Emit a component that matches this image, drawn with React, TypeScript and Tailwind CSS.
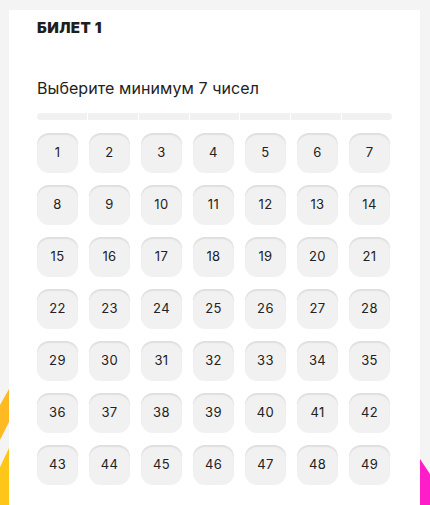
const numbers = Array.from({ length: 49 }, (_, i) => i + 1)

export default function App() {
  return (
    <div className="flex h-[505px] w-[430px] overflow-hidden bg-[#f4f4f4] font-['Inter',sans-serif] text-[#1e1e1e]">
      {/* left stripes */}
      <div className="w-[9px] shrink-0">
        <svg width="9" height="505" viewBox="0 0 9 505">
          <polygon points="9,389 9,422 0,440 0,405" fill="#ffb921" />
          <polygon points="9,448 9,505 0,505 0,467" fill="#ffc61a" />
        </svg>
      </div>

      {/* card */}
      <div className="mt-[10px] w-[411px] shrink-0 bg-white px-[28px] pt-[8px]">
        <h2 className="text-[15px] leading-[20px] font-black tracking-[0.03em]">БИЛЕТ 1</h2>
        <p className="mt-[38px] text-[16px] leading-[24px] tracking-[0.005em] text-[#222]">
          Выберите минимум 7 чисел
        </p>

        {/* progress */}
        <div className="mt-[13px] flex h-[7px] w-[355px] gap-px overflow-hidden rounded-full">
          {Array.from({ length: 7 }).map((_, i) => (
            <div key={i} className="flex-1 bg-[#f1f1f1]" />
          ))}
        </div>

        {/* numbers */}
        <div className="mt-[13px] grid w-[353px] grid-cols-7 gap-x-[11px] gap-y-[12px]">
          {numbers.map((n) => (
            <button
              key={n}
              className="flex h-[40px] items-center justify-center rounded-[12px] bg-[#f1f1f1] text-[13px] tracking-[0.03em] text-[#222] shadow-[inset_0_2px_1px_#dfdfdf]"
            >
              {n}
            </button>
          ))}
        </div>
      </div>

      {/* right strip */}
      <div className="w-[10px] shrink-0">
        <svg width="10" height="505" viewBox="0 0 10 505">
          <polygon points="0,459 10,474 10,505 0,505" fill="#ff1dc9" />
        </svg>
      </div>
    </div>
  )
}
